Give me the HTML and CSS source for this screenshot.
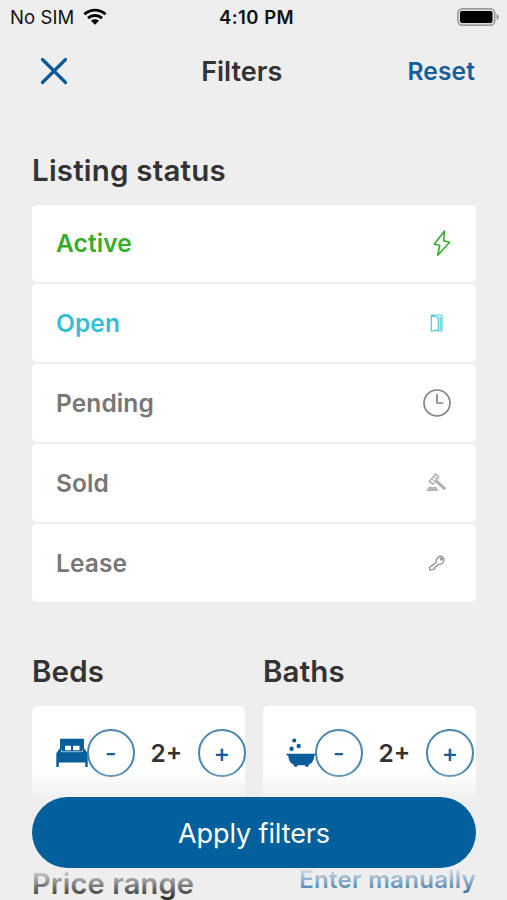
FILE: index.html
```
<!DOCTYPE html>
<html lang="en">
<head>
<meta charset="utf-8">
<title>Filters</title>
<link rel="stylesheet" href="styles.css">
</head>
<body>
<div class="screen">
  <div class="statusbar">
    <div class="carrier"><span>No SIM</span>
      <svg width="24" height="18" viewBox="0 0 24 18"><g fill="none" stroke="#000" stroke-width="2.900"><path d="M1.400 6.300C7.400.7 16.600.7 22.600 6.300"/><path d="M5 10.200c4-3.600 10-3.600 14 0"/></g><path d="M8 12.800c2.300-2 5.700-2 8 0l-4 4z"/></svg>
    </div>
    <div class="time">4:10 PM</div>
    <svg class="battery" width="42" height="18" viewBox="0 0 42 18"><rect x=".8" y=".8" width="37" height="16.400" rx="4.500" fill="#ddd" stroke="#969696" stroke-width="1.400"/><rect x="3" y="3" width="32.500" height="12" rx="2" fill="#000"/><path d="M39.600 6c2.700 1 2.700 5 0 6z" fill="#888"/></svg>
  </div>
  <header class="navbar">
    <svg class="close" width="28" height="28" viewBox="0 0 28 28"><path d="M2.500 2.500l23 23M25.500 2.500l-23 23" fill="none" stroke="#0b5a93" stroke-width="3.200" stroke-linecap="round"/></svg>
    <h1>Filters</h1>
    <a class="reset">Reset</a>
  </header>
  <main>
    <h2 class="heading heading-status">Listing status</h2>
    <ul class="statuses">
      <li class="row active"><span>Active</span><svg width="18" height="28" viewBox="0 0 18 28"><path d="M11.500 2L1.300 15.300l5.400 1L4.800 26.200 16.600 13.300l-5.900-1.500z" fill="none" stroke="#36ad2a" stroke-width="1.600" stroke-linejoin="round"/></svg></li>
      <li class="row open"><span>Open</span><svg width="28" height="28" viewBox="0 0 28 28"><path d="M8.300 6h11M8.300 6v16l7-.8M8.300 6.300l7 2.400v13.800M19 6v16h-3.500M17.200 8v13" fill="none" stroke="#4ecbdc" stroke-width="1.200"/></svg></li>
      <li class="row"><span>Pending</span><svg width="28" height="28" viewBox="0 0 28 28"><g fill="none" stroke="#858585" stroke-width="1.700"><circle cx="14" cy="14" r="13"/><path d="M14 5v9h6.300"/></g></svg></li>
      <li class="row"><span>Sold</span><svg width="28" height="28" viewBox="0 0 28 28"><g fill="none" stroke="#b0b0b0" stroke-width="1.200"><path d="M11.800 4.200l4.200 3.500M5.600 11.700l4.700 4M12.200 5.200l-5.600 6.700 3.500 3 5.700-6.700zM10.500 7.300l3.500 3M8.500 9.600l3.600 3"/><path d="M13 11.800l9.300 8.300" stroke-width="3"/><path d="M6 18.500h7l1.500 3H4.300z" fill="#bbb"/></g></svg></li>
      <li class="row"><span>Lease</span><svg width="28" height="28" viewBox="0 0 28 28"><g fill="none" stroke="#929292" stroke-width="1.300" stroke-linejoin="round"><path d="M13.500 13.200c-1-4.200 3-7.300 6-5.200 3.300 2.400.6 8-4 7.400L12 18.300l-.3 1.700-2.500.7-2.300.4-.4-2.500z"/><circle cx="18.300" cy="10" r="1"/></g></svg></li>
    </ul>
    <div class="counters">
      <section>
        <h2 class="heading">Beds</h2>
        <div class="card beds">
          <svg width="32" height="30" viewBox="0 0 32 30"><path fill="#075e9b" fill-rule="evenodd" d="M5 .8h22c.6 0 1 .4 1 1v8.500l3.700 5V29h-2.400v-4.500H2.800V29H.3V15.300L4 10.300V1.800c0-.6.400-1 1-1zM9 7.800v4.500h6V7.800zM17 7.800v4.500h6.500V7.800z"/><path d="M5.500 11.500v2.200h21v-2.200" fill="none" stroke="#fff" stroke-width=".6"/></svg>
          <button class="round">-</button><span class="count">2+</span><button class="round">+</button>
        </div>
      </section>
      <section>
        <h2 class="heading">Baths</h2>
        <div class="card baths">
          <svg width="30" height="30" viewBox="0 0 30 30"><g fill="#075e9b"><circle cx="8.300" cy="2.500" r="2.100"/><circle cx="12.700" cy="8" r="2.200"/><circle cx="5.600" cy="10.800" r="2.200"/><path d="M.5 15.700h29.500v1.700h-1.700c-.4 5-2.300 8-5.300 9.200l-.7 2.200h-2.500l-1-1.600h-7l-1 1.600H8.300l-.8-2.200C4.500 25.500 2.700 22.500 2.200 17.400H.5z"/></g></svg>
          <button class="round">-</button><span class="count">2+</span><button class="round">+</button>
        </div>
      </section>
    </div>
    <div class="price"><h2 class="heading">Price range</h2><a>Enter manually</a></div>
  </main>
  <footer class="applybar"><button class="apply">Apply filters</button></footer>
</div>
</body>
</html>
```
FILE: styles.css
```
* { box-sizing: border-box; }
body { margin: 0; background: #eee; font-family: Inter, "Liberation Sans", sans-serif; color: #333; }
h1, h2, ul { margin: 0; padding: 0; }
button { font: inherit; padding: 0; }
svg { display: block; flex: none; }
.screen { position: relative; height: 900px; overflow: hidden; }
.statusbar { height: 34px; display: grid; grid-template-columns: 1fr auto 1fr; align-items: center; padding: 0 8px 0 10px; color: #111; }
.carrier { display: flex; align-items: center; gap: 9px; font-size: 18.500px; line-height: 34px; letter-spacing: 0.1px; }
.time { font-size: 18.500px; font-weight: 600; letter-spacing: 0.45px; margin-left: 4px; }
.battery { justify-self: end; }
.navbar { height: 76px; display: flex; justify-content: space-between; align-items: center; padding: 0 32px 2px 40px; }
.close { margin-right: 8px; }
.navbar h1 { font-size: 27px; font-weight: 600; line-height: 72px; padding-top: 2px; }
.reset { color: #145f98; font-size: 24.500px; font-weight: 600; letter-spacing: 0.15px; }
main { padding: 0 31px 0 32px; }
.heading { font-size: 29.500px; font-weight: 600; line-height: 36px; letter-spacing: 0.15px; white-space: nowrap; }
.heading-status { margin-top: 42px; letter-spacing: 0.2px; }
.statuses { list-style: none; margin-top: 16.500px; display: flex; flex-direction: column; gap: 2px; }
.row { height: 77.900px; border-radius: 5px; background: #fff; display: flex; align-items: center; justify-content: space-between; padding: 0 25px 0 24px; font-size: 24.500px; font-weight: 600; letter-spacing: 0.1px; color: #777; }
.row span { padding-bottom: 1px; }
.active { color: #36ad2a; }
.open { color: #35bfd6; }
.counters { display: grid; grid-template-columns: 213px 213px; gap: 18px; margin-top: 51px; }
.card { height: 96px; margin-top: 17px; background: #fff; border-radius: 6px; display: flex; align-items: center; padding: 0 0 2px 24px; }
.baths { padding-left: 23px; }
.round { width: 47.500px; height: 47.500px; flex: none; border: 2px solid #4a86ae; border-radius: 50%; background: transparent; color: #145f98; font-size: 25px; font-weight: 500; }
.beds svg, .baths svg { margin-right: -1px; }
.count { width: 63.500px; flex: none; text-align: center; font-size: 24.500px; font-weight: 600; }
.price { display: flex; justify-content: space-between; align-items: center; margin-top: 64px; }
.price .heading { font-size: 29px; }
.price a { color: #145f98; font-size: 24px; font-weight: 600; letter-spacing: 0.3px; margin-top: -8px; }
.applybar { position: absolute; left: 0; right: 0; bottom: 0; height: 136px; padding: 33px 31px 0 32px; background: linear-gradient(rgba(238,238,238,0) 6px, #eee 38px, #eee 102px, rgba(238,238,238,0) 134px); }
.apply { display: block; width: 100%; height: 71px; border: 0; border-radius: 36px; background: #03609c; color: #fff; font-size: 27px; letter-spacing: -0.1px; padding-top: 2px; }
```
